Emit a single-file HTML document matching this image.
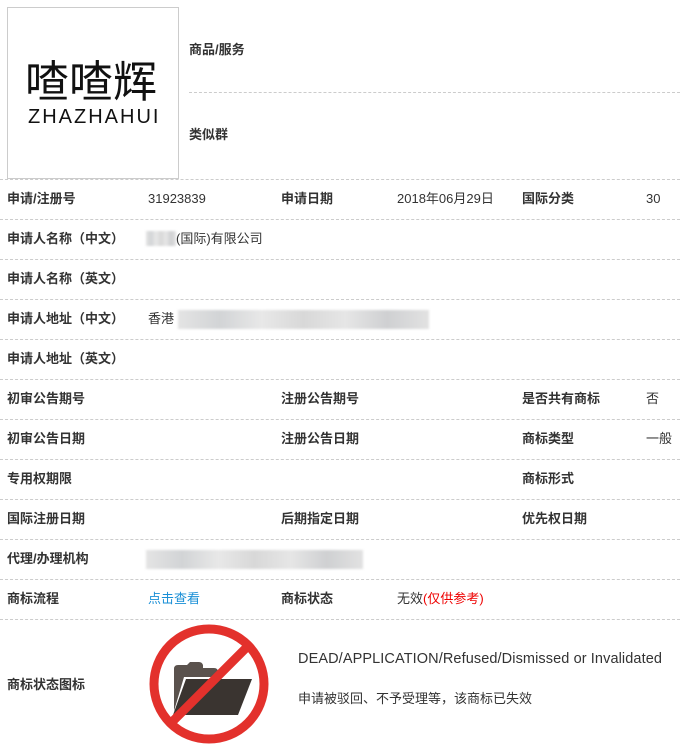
<!DOCTYPE html>
<html><head><meta charset="utf-8"><style>
*{margin:0;padding:0;box-sizing:border-box}
body{width:680px;height:745px;background:#fff;position:relative;overflow:hidden;font-family:"Liberation Sans","Noto Sans CJK SC",sans-serif;font-size:13px;color:#333}
.a{position:absolute;white-space:nowrap;line-height:16px}
.b{font-weight:bold;color:#333}
.l{position:absolute;left:0;width:680px;border-top:1px dashed #ccc}
.blur{position:absolute;background:linear-gradient(90deg,#e4e4e4,#d2d4d6,#e8e8e8,#d8d8d8,#e6e6e6,#cfd0d2,#e2e2e2);filter:blur(1px)}
</style></head><body>
<div style="position:absolute;left:7px;top:7px;width:172px;height:172px;border:1px solid #ccc"></div>
<div class="a" style="left:25px;top:59px;font-size:44px;line-height:48px;color:#111">喳喳辉</div>
<div class="a" style="left:28px;top:107px;font-size:20px;line-height:20px;color:#111;letter-spacing:2px">ZHAZHAHUI</div>
<div class="a b" style="left:189px;top:42px">商品/服务</div>
<div class="l" style="left:189px;width:491px;top:92px"></div>
<div class="a b" style="left:189px;top:127px">类似群</div>
<div class="l" style="top:179px"></div>

<div class="a b" style="left:7px;top:191px">申请/注册号</div>
<div class="a" style="left:148px;top:191px">31923839</div>
<div class="a b" style="left:281px;top:191px">申请日期</div>
<div class="a" style="left:397px;top:191px">2018年06月29日</div>
<div class="a b" style="left:522px;top:191px">国际分类</div>
<div class="a" style="left:646px;top:191px">30</div>
<div class="l" style="top:219px"></div>

<div class="a b" style="left:7px;top:231px">申请人名称（中文）</div>
<div class="blur" style="left:146px;top:231px;width:30px;height:15px"></div>
<div class="a" style="left:176px;top:231px">(国际)有限公司</div>
<div class="l" style="top:259px"></div>

<div class="a b" style="left:7px;top:271px">申请人名称（英文）</div>
<div class="l" style="top:299px"></div>

<div class="a b" style="left:7px;top:311px">申请人地址（中文）</div>
<div class="a" style="left:148px;top:311px">香港</div>
<div class="blur" style="left:178px;top:310px;width:251px;height:19px"></div>
<div class="l" style="top:339px"></div>

<div class="a b" style="left:7px;top:351px">申请人地址（英文）</div>
<div class="l" style="top:379px"></div>

<div class="a b" style="left:7px;top:391px">初审公告期号</div>
<div class="a b" style="left:281px;top:391px">注册公告期号</div>
<div class="a b" style="left:522px;top:391px">是否共有商标</div>
<div class="a" style="left:646px;top:391px">否</div>
<div class="l" style="top:419px"></div>

<div class="a b" style="left:7px;top:431px">初审公告日期</div>
<div class="a b" style="left:281px;top:431px">注册公告日期</div>
<div class="a b" style="left:522px;top:431px">商标类型</div>
<div class="a" style="left:646px;top:431px">一般</div>
<div class="l" style="top:459px"></div>

<div class="a b" style="left:7px;top:471px">专用权期限</div>
<div class="a b" style="left:522px;top:471px">商标形式</div>
<div class="l" style="top:499px"></div>

<div class="a b" style="left:7px;top:511px">国际注册日期</div>
<div class="a b" style="left:281px;top:511px">后期指定日期</div>
<div class="a b" style="left:522px;top:511px">优先权日期</div>
<div class="l" style="top:539px"></div>

<div class="a b" style="left:7px;top:551px">代理/办理机构</div>
<div class="blur" style="left:146px;top:550px;width:217px;height:19px"></div>
<div class="l" style="top:579px"></div>

<div class="a b" style="left:7px;top:591px">商标流程</div>
<div class="a" style="left:148px;top:591px;color:#1a8fd6">点击查看</div>
<div class="a b" style="left:281px;top:591px">商标状态</div>
<div class="a" style="left:397px;top:591px">无效<span style="color:#e00">(仅供参考)</span></div>
<div class="l" style="top:619px"></div>

<div class="a b" style="left:7px;top:677px">商标状态图标</div>
<svg style="position:absolute;left:148px;top:623px" width="122" height="122" viewBox="0 0 122 122">
<path d="M26 62 V46 Q26 42 30 42 H39 L42 39 H51 Q54 39 55 42 V45 H66 Q70 45 70 49 V54 H36 L26 88 Z" fill="#5a524d"/>
<path d="M38 56 H104 L90 92 H25 Z" fill="#3a3430"/>
<circle cx="61" cy="61" r="55" fill="none" stroke="#e3312c" stroke-width="9"/>
<line x1="101" y1="22" x2="22" y2="101" stroke="#e3312c" stroke-width="9"/>
</svg>
<div class="a" style="left:298px;top:651px;font-size:14.5px;letter-spacing:0.1px">DEAD/APPLICATION/Refused/Dismissed or Invalidated</div>
<div class="a" style="left:298px;top:691px">申请被驳回、不予受理等，该商标已失效</div>
</body></html>
